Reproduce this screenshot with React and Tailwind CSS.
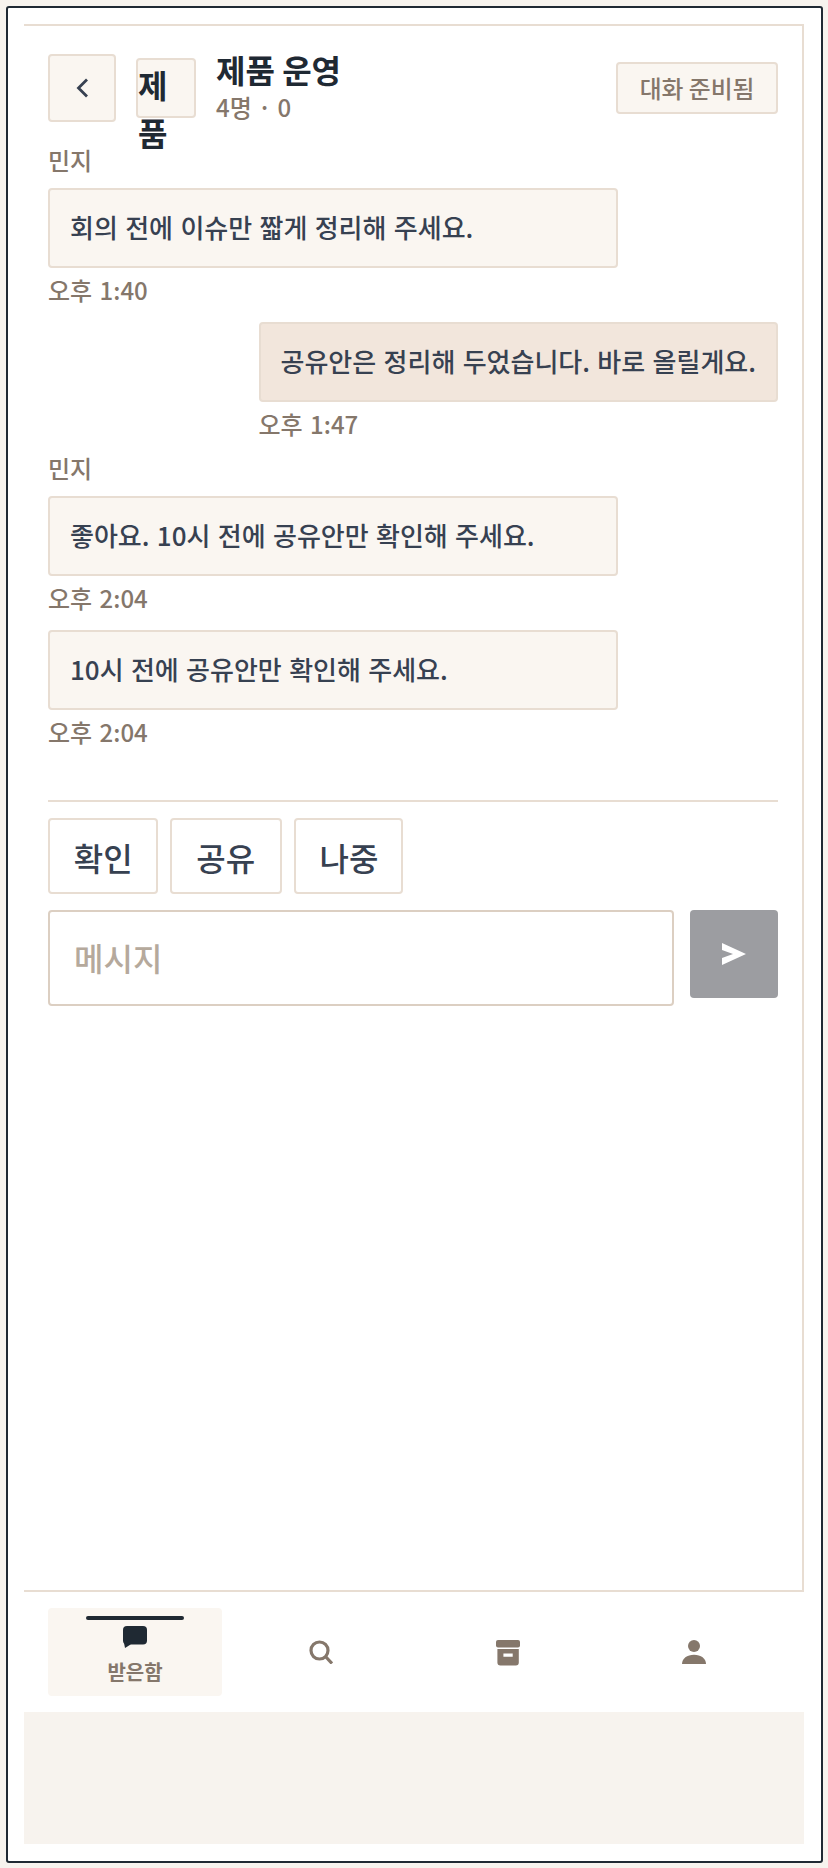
function Bubble({ children, own }) {
  return (
    <div className={`border-2 border-[#e8ddd2] rounded-[4px] px-[20px] pt-[17px] pb-[19px] text-[26px] leading-[40px] font-medium [word-spacing:1.5px] text-[#374151] ${own ? "bg-[#f2e6dc]" : "bg-[#faf6f1] w-[570px]"}`}>
      {children}
    </div>
  );
}
function Time({ children }) {
  return <div className="mt-[4px] mb-[-1px] text-[24px] leading-[36px] font-medium [word-spacing:2px] text-[#85776b]">{children}</div>;
}
function Sender({ children }) {
  return <div className="-mt-[1px] mb-[15px] text-[24px] leading-[26px] font-medium text-[#85776b]">{children}</div>;
}
function Tab({ active, label, children }) {
  return (
    <div className={`relative h-[88px] rounded-[4px] flex flex-col items-center ${active ? "bg-[#faf6f1] pt-[18px]" : "pt-[32px]"}`}>
      {active && <div className="absolute top-[8px] left-[38px] w-[98px] h-[4px] rounded-full bg-[#1f2933]" />}
      {children}
      {label && <div className="text-[20px] leading-[30px] font-semibold text-[#85776b] mt-[9px]">{label}</div>}
    </div>
  );
}
const quick = [
  { t: "확인", w: "w-[109.5px] pl-[1px]" },
  { t: "공유", w: "w-[111.5px]" },
  { t: "나중", w: "w-[109px] pl-[1px]" },
];
export default function App() {
  return (
    <div className="h-screen bg-[#f7f3ee] pl-[6px] pt-[6px] pr-[5px] pb-[5px] [font-family:'Noto_Sans_CJK_KR',sans-serif]">
      <div className="h-full bg-white border-2 border-[#1f2933] rounded-[3px] pl-[16px] pt-[16px] pr-[17px] pb-[17px] flex flex-col">
        <div className="flex-1 border-t-2 border-r-2 border-b-2 border-[#e8ddd2] px-[24px] pt-[28px] flex flex-col">
          <div className="flex items-center h-[68px]">
            <button className="w-[68px] h-[68px] border-2 border-[#e8ddd2] rounded-[4px] bg-[#faf6f1] flex items-center justify-center shrink-0">
              <svg width="24" height="24" viewBox="0 0 24 24" fill="none" stroke="#374151" strokeWidth="2.8"><path d="M17 3.5 8.5 12l8.5 8.5" /></svg>
            </button>
            <div className="ml-[20px] w-[60px] h-[60px] border-2 border-[#e8ddd2] rounded-[4px] bg-[#faf6f1] text-[32px] leading-[48px] font-bold text-[#1f2933] shrink-0">제품</div>
            <div className="ml-[20px] flex-1 -mt-[2px]">
              <div className="text-[32px] leading-[40px] font-bold text-[#1f2933]">제품 운영</div>
              <div className="text-[24px] leading-[36px] font-medium [word-spacing:0.6px] text-[#85776b]">4명 · 0</div>
            </div>
            <div className="h-[52px] px-[21.5px] border-2 border-[#e8ddd2] rounded-[4px] bg-[#faf6f1] text-[23.8px] font-medium text-[#85776b] flex items-center">대화 준비됨</div>
          </div>
          <div className="mt-[26px] flex flex-col gap-[15px]">
            <div className="flex flex-col items-start">
              <Sender>민지</Sender>
              <Bubble>회의 전에 이슈만 짧게 정리해 주세요.</Bubble>
              <Time>오후 1:40</Time>
            </div>
            <div className="flex flex-col items-start self-end">
              <Bubble own>공유안은 정리해 두었습니다. 바로 올릴게요.</Bubble>
              <Time>오후 1:47</Time>
            </div>
            <div className="flex flex-col items-start">
              <Sender>민지</Sender>
              <Bubble>좋아요. 10시 전에 공유안만 확인해 주세요.</Bubble>
              <Time>오후 2:04</Time>
            </div>
            <div className="flex flex-col items-start">
              <Bubble>10시 전에 공유안만 확인해 주세요.</Bubble>
              <Time>오후 2:04</Time>
            </div>
          </div>
          <div className="mt-[51px] border-t-2 border-[#e8ddd2] pt-[16px]">
            <div className="flex gap-[12.5px]">
              {quick.map((q) => (
                <button key={q.t} className={`h-[76px] ${q.w} pt-[1px] border-2 border-[#e8ddd2] rounded-[4px] bg-white text-[32px] font-medium text-[#374151]`}>{q.t}</button>
              ))}
            </div>
            <div className="mt-[16px] flex gap-[16px] items-start">
              <input readOnly placeholder="메시지" className="w-[626px] h-[96px] border-2 border-[#dccfc2] rounded-[4px] px-[24px] pb-[2px] text-[32px] font-medium outline-none placeholder:text-[#b5a99c]" />
              <button className="w-[88px] h-[88px] rounded-[4px] bg-[#9c9da1] flex items-center justify-center">
                <svg width="24" height="24" viewBox="0 0 24 24" fill="#fff"><path d="M0 1l24 11L0 23v-7L11 12 0 8z" /></svg>
              </button>
            </div>
          </div>
        </div>
        <div className="px-[24px] pt-[16px] pb-[16px] grid grid-cols-[repeat(4,174px)] gap-[12.4px]">
          <Tab active label="받은함">
            <svg width="24" height="22" viewBox="0 0 24 22" fill="#1f2933"><rect width="24" height="18.4" rx="4" /><path d="M1 17l1 5 6-3.8z" /></svg>
          </Tab>
          <Tab>
            <svg width="24" height="24" viewBox="0 0 24 24" fill="none" stroke="#85776b" strokeWidth="3.2"><circle cx="10.5" cy="10.5" r="8.5" /><path d="M16.5 16.5l6.5 7" /></svg>
          </Tab>
          <Tab>
            <svg width="24" height="26" viewBox="0 0 24 26" fill="#85776b"><rect width="24" height="7.4" rx="2" /><path fillRule="evenodd" d="M1.4 9h21.4v13.4a3 3 0 0 1-3 3H4.4a3 3 0 0 1-3-3zM7.4 13.4v3.3h9.3v-3.3z" /></svg>
          </Tab>
          <Tab>
            <svg width="24" height="24" viewBox="0 0 24 24" fill="#85776b"><circle cx="12" cy="6" r="6" /><path d="M0 24C0 18.5 5 14.7 12 14.7S24 18.5 24 24z" /></svg>
          </Tab>
        </div>
        <div className="h-[132px] bg-[#f7f3ee]" />
      </div>
    </div>
  );
}
